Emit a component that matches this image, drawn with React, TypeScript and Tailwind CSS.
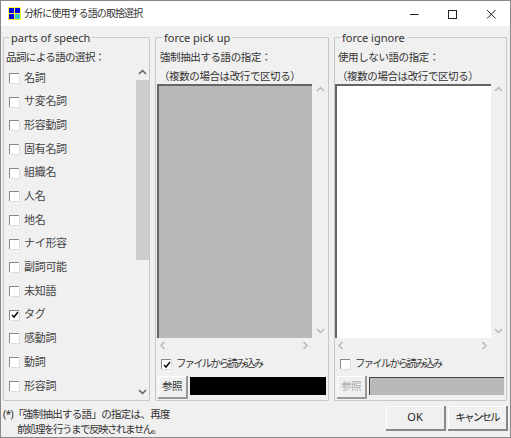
const font = { fontFamily: '"Noto Sans", "Noto Sans CJK JP", sans-serif' }

const speechParts = [
  { name: '名詞' },
  { name: 'サ変名詞' },
  { name: '形容動詞' },
  { name: '固有名詞' },
  { name: '組織名' },
  { name: '人名' },
  { name: '地名' },
  { name: 'ナイ形容' },
  { name: '副詞可能' },
  { name: '未知語' },
  { name: 'タグ', checked: true },
  { name: '感動詞' },
  { name: '動詞' },
  { name: '形容詞' },
]

function CheckBox({ checked = false }: { checked?: boolean }) {
  return (
    <span className="flex h-[10px] w-[10px] flex-none items-center justify-center border-t border-l border-t-[#888] border-l-[#888] bg-white shadow-[1px_1px_0_#ddd]">
      {checked && (
        <svg width="8" height="8" viewBox="0 0 8 8" fill="none">
          <path d="M1 4l2 2 4-5" stroke="#111" strokeWidth="1.6" />
        </svg>
      )}
    </span>
  )
}

function Arrow({ dir, dark = false }: { dir: 'up' | 'down' | 'left' | 'right'; dark?: boolean }) {
  const d = {
    up: 'M1 5l3.5-3.5L8 5',
    down: 'M1 2l3.5 3.5L8 2',
    left: 'M5.5 1L2 4.5 5.5 8',
    right: 'M2.5 1L6 4.5 2.5 8',
  }[dir]
  return (
    <svg width="9" height="9" viewBox="0 0 9 9" fill="none" className="flex-none">
      <path d={d} stroke={dark ? '#606060' : '#b8b8b8'} strokeWidth="1.5" />
    </svg>
  )
}

function TextPanel({ bg, width, barGap }: { bg: string; width: string; barGap: string }) {
  return (
    <div className="flex h-[268px] flex-col">
      <div className="flex h-[254px]">
        <div className={`border-t-2 border-l-2 border-t-[#666] border-l-[#666] ${width} ${bg}`} />
        <div className={`flex w-[13px] flex-col items-center justify-between py-[2px] ${barGap}`}>
          <Arrow dir="up" />
          <Arrow dir="down" />
        </div>
      </div>
      <div className={`flex h-[14px] items-center justify-between px-[2px] ${width}`}>
        <Arrow dir="left" />
        <Arrow dir="right" />
      </div>
    </div>
  )
}

function Group({
  title,
  className,
  legendClass,
  children,
}: {
  title: string
  className: string
  legendClass: string
  children: React.ReactNode
}) {
  return (
    <fieldset className={`h-[372px] min-w-0 flex-none rounded-[1px] border border-[#c8c8c8] ${className}`}>
      <legend className={`px-[2px] text-[11px] leading-[17px] text-[#333] ${legendClass}`}>{title}</legend>
      {children}
    </fieldset>
  )
}

function TextGroup({
  title,
  heading,
  className,
  panelBg,
  panelWidth,
  barGap,
  rowPad,
  inputWidth,
  fileChecked,
  disabled,
}: {
  title: string
  heading: string
  className: string
  panelBg: string
  panelWidth: string
  barGap: string
  rowPad: string
  inputWidth: string
  fileChecked: boolean
  disabled: boolean
}) {
  return (
    <Group title={title} className={className} legendClass="ml-[5px]">
      <div className="h-[22px] pl-[3px] text-[10.5px] leading-[22px] tracking-[-0.4px] whitespace-nowrap text-[#333]">
        {heading}
      </div>
      <div className="h-[16px] pl-[2px] text-[10.5px] leading-[16px] tracking-[-0.4px] whitespace-nowrap text-[#333]">
        （複数の場合は改行で区切る）
      </div>
      <TextPanel bg={panelBg} width={panelWidth} barGap={barGap} />
      <div className={rowPad}>
        <div className="flex h-[24px] items-center gap-[5px] pl-[3px] text-[10.5px] tracking-[-1.9px] whitespace-nowrap text-[#333]">
          <CheckBox checked={fileChecked} />
          <span>ファイルから読み込み</span>
        </div>
        <div className="flex h-[23px] items-start gap-[2px]">
          <button
            className={`h-[23px] w-[30px] border-r-2 border-b-2 border-r-[#999] border-b-[#999] bg-[#f0f0f0] text-[10.5px] tracking-[-0.4px] shadow-[inset_1px_1px_0_#fff] ${
              disabled ? 'text-[#aaa]' : 'text-[#333]'
            }`}
          >
            参照
          </button>
          {disabled ? (
            <div className={`mt-[1px] h-[18px] border-t border-l border-t-[#444] border-l-[#444] bg-[#b9b9b9] ${inputWidth}`} />
          ) : (
            <div className={`mt-[1px] h-[18px] bg-black ${inputWidth}`} />
          )}
        </div>
      </div>
    </Group>
  )
}

export default function App() {
  return (
    <div className="flex h-[438px] w-[511px] flex-col overflow-hidden border border-[#8a8a8a] bg-[#f0f0f0]" style={font}>
      {/* title bar */}
      <div className="flex h-[25px] flex-none items-center bg-white pl-[7px]">
        <svg width="13" height="13" viewBox="0 0 13 13" className="flex-none">
          <rect width="13" height="13" fill="#ffff40" />
          <rect x="1" y="1" width="5" height="5" fill="#0000e0" />
          <rect x="7" y="1" width="5" height="5" fill="#0000e0" />
          <rect x="1" y="7" width="5" height="5" fill="#0000e0" />
          <rect x="7" y="7" width="5" height="5" fill="#30c8c8" />
        </svg>
        <span className="ml-[3px] text-[10px] tracking-[-0.9px] whitespace-nowrap text-[#333]">
          分析に使用する語の取捨選択
        </span>
        <div className="ml-auto flex items-center">
          <svg width="86" height="12" viewBox="0 0 86 12" fill="none" stroke="#222" className="mr-[14px]">
            <path d="M0 6.5h8.5" />
            <rect x="38.5" y="2.5" width="8" height="8" strokeWidth="1" />
            <path d="M77 2l8.5 8.5M85.5 2L77 10.5" />
          </svg>
        </div>
      </div>

      {/* group boxes */}
      <div className="flex flex-none gap-[5px] pl-[2px] pt-[3px]">
        <Group title="parts of speech" className="w-[147px] pl-[2px]" legendClass="ml-[3px]">
          <div className="h-[22px] text-[10.5px] leading-[22px] tracking-[-0.6px] whitespace-nowrap text-[#333]">
            品詞による語の選択：
          </div>
          <div className="flex h-[331px]">
            <ul className="-mt-[2px] w-[130px] pl-[3px]">
              {speechParts.map((part) => (
                <li
                  key={part.name}
                  className="flex h-[23.7px] items-center gap-[5px] text-[11px] tracking-[-0.3px] text-[#444]"
                >
                  <CheckBox checked={part.checked} />
                  <span>{part.name}</span>
                </li>
              ))}
            </ul>
            <div className="flex w-[13px] flex-col items-center pt-[1px]">
              <Arrow dir="up" dark />
              <div className="mt-[2px] h-[180px] w-full bg-[#cdcdcd]" />
              <div className="mt-auto pb-[2px]">
                <Arrow dir="down" dark />
              </div>
            </div>
          </div>
        </Group>
        <TextGroup
          title="force pick up"
          heading="強制抽出する語の指定："
          className="w-[174px] pl-[1px]"
          panelBg="bg-[#b9b9b9]"
          panelWidth="w-[155px]"
          barGap="ml-[2px]"
          rowPad="pl-[1px]"
          inputWidth="w-[136px]"
          fileChecked
          disabled={false}
        />
        <TextGroup
          title="force ignore"
          heading="使用しない語の指定："
          className="w-[173px]"
          panelBg="bg-white"
          panelWidth="w-[156px]"
          barGap="ml-[1px]"
          rowPad="pl-[2px]"
          inputWidth="w-[135px]"
          fileChecked={false}
          disabled
        />
      </div>

      {/* footer */}
      <div className="flex flex-1 items-start justify-between pl-[2px] pr-[2px] pt-[6px]">
        <p className="text-[10.5px] leading-[15px] whitespace-nowrap text-[#333]">
          <span className="tracking-[-0.7px]">(*)「強制抽出する語」の指定は、再度</span>
          <br />
          <span className="pl-[14px] tracking-[-1.5px]">前処理を行うまで反映されません。</span>
        </p>
        <div className="-mt-[1px] flex gap-[2px]">
          <button className="h-[25px] w-[60px] border-r-2 border-b-2 border-r-[#888] border-b-[#888] bg-[#f0f0f0] text-[11px] text-[#222] shadow-[inset_1px_1px_0_#fff]">
            OK
          </button>
          <button className="h-[25px] w-[60px] border-r-2 border-b-2 border-r-[#888] border-b-[#888] bg-[#f0f0f0] text-[10.5px] tracking-[-1.8px] whitespace-nowrap text-[#222] shadow-[inset_1px_1px_0_#fff]">
            キャンセル
          </button>
        </div>
      </div>
    </div>
  )
}
